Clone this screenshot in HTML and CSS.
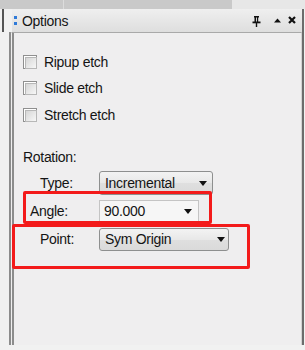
FILE: index.html
```html
<!DOCTYPE html>
<html lang="en">
<head>
    <meta charset="UTF-8">
    <title>Options</title>
    <link rel="stylesheet" href="styles.css">
</head>
<body>
    <div class="top">
        <div class="top-tab"><span class="top-sep"></span></div>
    </div>

    <div class="dock">
        <div class="title-row">
            <div class="titlebar">
                <span class="grip"><i></i><i></i></span>
                <span class="title">Options</span>
                <span class="tools">
                    <svg class="tool-pin" width="9" height="11" viewBox="0 0 9 11">
                        <rect x="2" y="0" width="5" height="1.5" fill="#111"/>
                        <rect x="2.5" y="1" width="1.6" height="5" fill="#111"/>
                        <rect x="5" y="1" width="1.2" height="5" fill="#111"/>
                        <rect x="0.5" y="5.5" width="8" height="1.8" fill="#111"/>
                        <rect x="3.8" y="7" width="1.4" height="4" fill="#111"/>
                    </svg>
                    <svg class="tool-up" width="7" height="5" viewBox="0 0 7 5">
                        <path d="M0 4.5 L3.5 0.5 L7 4.5 Z" fill="#111"/>
                    </svg>
                    <svg class="tool-close" width="8" height="8" viewBox="0 0 8 8">
                        <path d="M1 1 L7 7 M7 1 L1 7" stroke="#111" stroke-width="2.2"/>
                    </svg>
                </span>
            </div>
        </div>

        <div class="panel">
            <div class="checks">
                <label class="check"><span class="box"></span>Ripup etch</label>
                <label class="check"><span class="box"></span>Slide etch</label>
                <label class="check"><span class="box"></span>Stretch etch</label>
            </div>

            <div class="section">Rotation:</div>

            <div class="fields">
                <div class="field">
                    <span class="field-label label-type">Type:</span>
                    <div class="combo combo-type">Incremental<span class="arrow"></span></div>
                </div>
                <div class="field">
                    <span class="field-label label-angle">Angle:</span>
                    <div class="combo combo-edit">90.000<span class="arrow"></span></div>
                </div>
                <div class="field">
                    <span class="field-label label-point">Point:</span>
                    <div class="combo combo-point">Sym Origin<span class="arrow"></span></div>
                </div>
            </div>
        </div>
    </div>

    <!-- red highlight marks drawn over the panel -->
    <div class="mark mark-angle"></div>
    <div class="mark mark-point"></div>
</body>
</html>
```

FILE: styles.css
```css
* {
    margin: 0;
    padding: 0;
    box-sizing: border-box;
}

body {
    width: 305px;
    height: 350px;
    overflow: hidden;
    background: #f1f1f1;
    font-family: 'Liberation Sans', Arial, sans-serif;
    font-size: 14px;
    letter-spacing: -0.3px;
    color: #141414;
    position: relative;
}

.top {
    height: 9px;
    display: flex;
    background: #e7e7e7;
}

.top-tab {
    width: 232px;
    background: #c9c9c9;
}

.top-sep {
    display: block;
    width: 1px;
    height: 9px;
    margin-left: 63px;
    background: #dcdcdc;
}

.dock {
    width: 304px;
    height: 336px;
    border-right: 2px solid #6c6c6c;
    display: flex;
    flex-direction: column;
}

.title-row {
    height: 23px;
    margin-left: 2px;
    border-left: 2px solid #555;
    padding-left: 8px;
    display: flex;
}

.titlebar {
    flex: 1;
    display: flex;
    align-items: center;
    padding-left: 2px;
    background: linear-gradient(#efefef, #dedede);
}

.grip {
    display: flex;
    flex-direction: column;
    gap: 3px;
}

.grip i {
    display: block;
    width: 3px;
    height: 3px;
    background: #2f7ad8;
}

.title {
    margin-left: 5px;
    font-size: 14px;
    color: #151515;
}

.tools {
    margin-left: auto;
    padding-right: 6px;
    display: flex;
    align-items: center;
}

.tool-pin {
    margin-top: 2px;
}

.tool-up {
    margin-left: 13px;
    margin-top: -1px;
}

.tool-close {
    margin-left: 7px;
    margin-top: -1px;
}

.panel {
    flex: 1;
    margin-left: 9px;
    border-left: 5px double #8c8c8c;
    border-top: 1px solid #a9a9a9;
    border-right: 1px solid #d2d2d2;
    background: #efeeef;
}

.checks {
    padding: 22px 0 0 9px;
    display: flex;
    flex-direction: column;
    gap: 13.5px;
}

.check {
    display: flex;
    align-items: center;
    gap: 7px;
    height: 13px;
}

.box {
    width: 14px;
    height: 14px;
    border: 1px solid #8f8f8f;
    background: #fff;
    padding: 1px;
}

.box::after {
    content: '';
    display: block;
    width: 100%;
    height: 100%;
    border: 1px solid #b7b7b7;
    background: linear-gradient(135deg, #d6d6d6, #f7f7f7);
}

.section {
    margin: 28px 0 0 9px;
    line-height: 16px;
}

.fields {
    margin-top: 6px;
    display: flex;
    flex-direction: column;
    gap: 4px;
}

.field {
    height: 24px;
    display: flex;
    align-items: center;
}

.field-label {
    width: 85px;
}

.label-type,
.label-point {
    padding-left: 26px;
}

.label-angle {
    padding-left: 16px;
}

.combo {
    height: 24px;
    display: flex;
    align-items: center;
    justify-content: space-between;
    padding: 0 5px 0 5px;
    border: 1px solid #8e8f8f;
    border-radius: 3px;
    background: linear-gradient(#f3f3f3, #e8e8e8 50%, #dfdfdf 51%, #dadada);
}

.combo-type {
    width: 114px;
}

.combo-edit {
    width: 100px;
    height: 23px;
    padding: 0 6px 0 4px;
    border: 1px solid #c4c4c4;
    border-radius: 0;
    background: #f6f6f6;
}

.combo-point {
    width: 130px;
    height: 23px;
    padding-right: 3px;
}

.arrow {
    width: 0;
    height: 0;
    border-left: 4px solid transparent;
    border-right: 4px solid transparent;
    border-top: 5px solid #111;
}

.mark {
    position: absolute;
    border: 3px solid #f31a1a;
    border-radius: 2px;
}

.mark-angle {
    left: 23px;
    top: 191px;
    width: 189px;
    height: 33px;
}

.mark-point {
    left: 12px;
    top: 224px;
    width: 238px;
    height: 45px;
}
```
